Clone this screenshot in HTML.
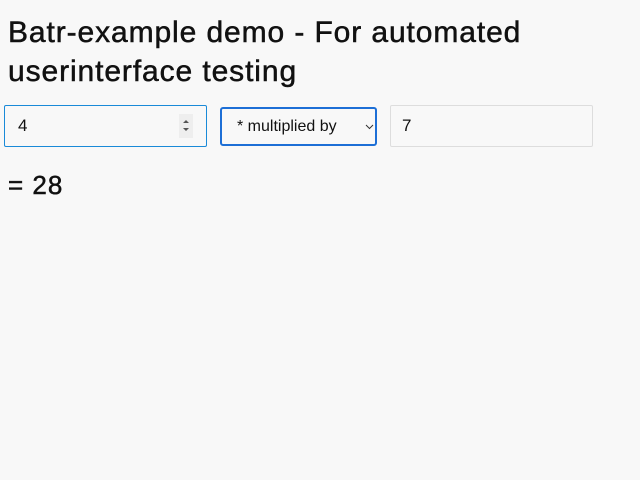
<!DOCTYPE html>
<html><head><style>
body{margin:0;background:#f8f8f8;font-family:"Liberation Sans",sans-serif;color:#111;}
h1{position:absolute;left:8px;top:13px;margin:0;font-size:30px;line-height:39px;font-weight:normal;width:600px;letter-spacing:0.9px;-webkit-text-stroke:0.5px #111;}
.box{position:absolute;box-sizing:border-box;font-size:17px;}
.i1{left:4px;top:105px;width:203px;height:42px;border:1px solid #1a8ad8;border-radius:2px;}
.i3{left:390px;top:105px;width:203px;height:42px;border:1px solid #ddd;border-radius:2px;}
.sel{left:220px;top:107px;width:157px;height:39px;border:2px solid #1d6fd6;border-radius:3px;}
.t{position:absolute;top:10px;}
.r{position:absolute;left:8px;top:170px;font-size:26px;letter-spacing:1px;-webkit-text-stroke:0.5px #111;}
</style></head><body>
<h1>Batr-example demo - For automated userinterface testing</h1>
<div class="box i1"><span class="t" style="left:13px">4</span>
<div style="position:absolute;left:174px;top:8px;width:14px;height:24px;background:#eee"></div>
<svg style="position:absolute;left:174px;top:8px" width="14" height="24"><path d="M4 9 L7 6 L10 9Z M4 14 L7 17 L10 14Z" fill="#555"/></svg></div>
<div class="box sel"><span class="t" style="left:15px;top:9px;font-size:16px">* multiplied by</span>
<svg style="position:absolute;left:143px;top:14px" width="10" height="8"><path d="M1 2 L4.5 5.5 L8 2" stroke="#333" fill="none"/></svg></div>
<div class="box i3"><span class="t" style="left:11px">7</span></div>
<div class="r">= 28</div>
</body></html>
